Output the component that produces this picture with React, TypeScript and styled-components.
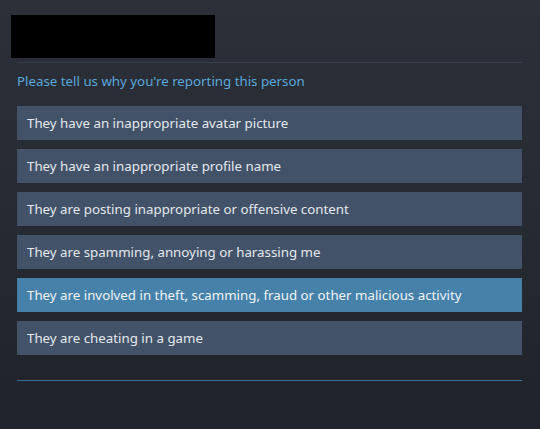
import React from 'react';
import styled, { createGlobalStyle } from 'styled-components';

const GlobalStyle = createGlobalStyle`
  html, body {
    margin: 0;
    padding: 0;
    background: #22252c;
  }
  body {
    font-family: "Noto Sans", "Open Sans", sans-serif;
  }
`

const Page = styled.div`
  width: 540px;
  height: 429px;
  box-sizing: border-box;
  background: linear-gradient(180deg, #2b3039 0%, #272b33 45%, #202329 100%);
  overflow: hidden;
`

const Header = styled.div`
  padding: 15px 0 0 11px;
`

const Redacted = styled.div`
  width: 204px;
  height: 43px;
  background: #000;
`

const Content = styled.div`
  margin: 4px 18px 0 17px;
`

const Divider = styled.div<{ $accent?: boolean }>`
  height: 1px;
  background: ${p => (p.$accent ? '#3d6f92' : '#3a404b')};
`

const Prompt = styled.p`
  margin: 10px 0 0;
  font-size: 13.3px;
  line-height: 16px;
  color: #5aa8da;
`

const Options = styled.div`
  display: flex;
  flex-direction: column;
  gap: 9px;
  margin-top: 17px;
  margin-bottom: 25px;
`

const Option = styled.div<{ $active?: boolean }>`
  display: flex;
  align-items: center;
  height: 34px;
  padding: 0 10px 1px;
  box-sizing: border-box;
  font-size: 13.3px;
  color: ${p => (p.$active ? '#eef3f7' : '#e4e8ec')};
  background: ${p => (p.$active ? '#4681a9' : '#425369')};
  cursor: pointer;
`

const reasons = [
  'They have an inappropriate avatar picture',
  'They have an inappropriate profile name',
  'They are posting inappropriate or offensive content',
  'They are spamming, annoying or harassing me',
  'They are involved in theft, scamming, fraud or other malicious activity',
  'They are cheating in a game',
]

const App = () => {
  return (
    <>
      <GlobalStyle />
      <Page>
        <Header>
          <Redacted />
        </Header>
        <Content>
          <Divider />
          <Prompt>Please tell us why you're reporting this person</Prompt>
          <Options>
            {reasons.map((r, i) => (
              <Option key={r} $active={i === 4}>{r}</Option>
            ))}
          </Options>
          <Divider $accent />
        </Content>
      </Page>
    </>
  )
}

export default App;
